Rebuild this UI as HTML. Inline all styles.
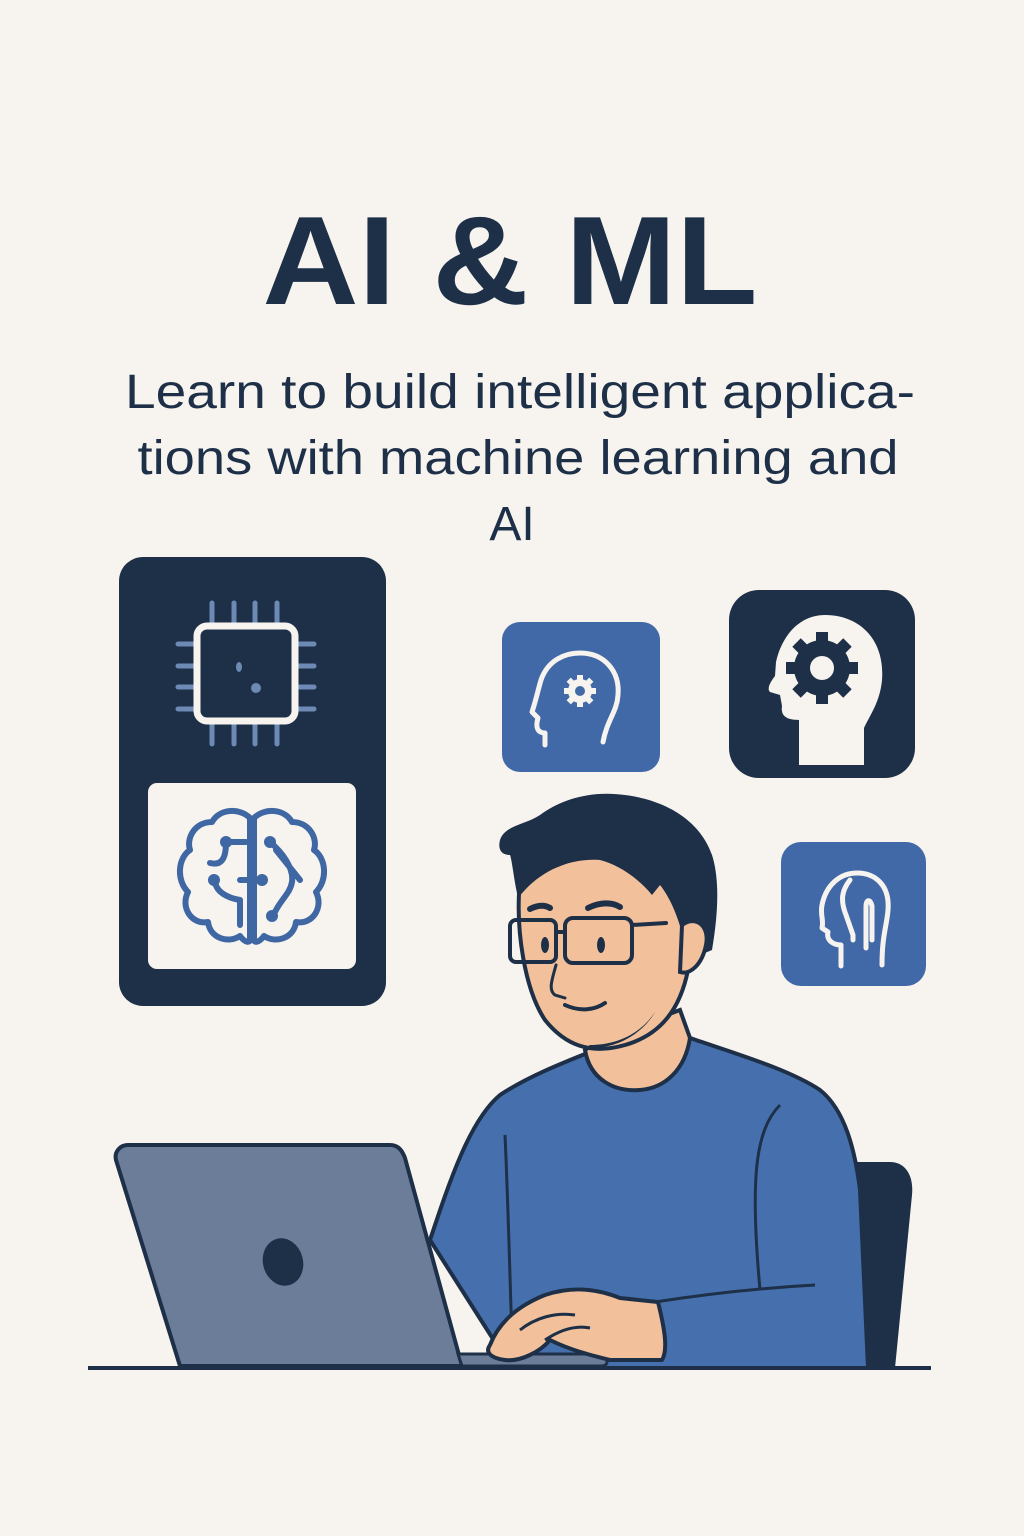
<!DOCTYPE html>
<html><head><meta charset="utf-8"><style>
html,body{margin:0;padding:0;background:#f7f4ef}
svg{display:block}
</style></head><body>
<svg width="1024" height="1536" viewBox="0 0 1024 1536" xmlns="http://www.w3.org/2000/svg">
<rect width="1024" height="1536" fill="#f7f4ef"/>
<g font-family="Liberation Sans, sans-serif" fill="#1e2f48">
<text x="510" y="304" font-size="126" font-weight="bold" text-anchor="middle" textLength="495" lengthAdjust="spacingAndGlyphs">AI &amp; ML</text>
<text x="520" y="408" font-size="48" text-anchor="middle" textLength="790" lengthAdjust="spacingAndGlyphs">Learn to build intelligent applica-</text>
<text x="518" y="474" font-size="48" text-anchor="middle" textLength="761" lengthAdjust="spacingAndGlyphs">tions with machine learning and</text>
<text x="512" y="540" font-size="48" text-anchor="middle">AI</text>
</g>

<!-- left panel -->
<rect x="119" y="557" width="267" height="449" rx="24" fill="#1e2f48"/>
<g stroke="#6d8ab5" stroke-width="5" stroke-linecap="round">
<path d="M212 603V623M234 603V623M255 603V623M277 603V623M212 724V744M234 724V744M255 724V744M277 724V744M178 644H194M178 666H194M178 687H194M178 709H194M298 644H314M298 666H314M298 687H314M298 709H314"/>
</g>
<rect x="197" y="626" width="98" height="95" rx="10" fill="#1e2f48" stroke="#f7f4ef" stroke-width="7"/>
<ellipse cx="239" cy="667" rx="3" ry="5" fill="#6d8ab5"/>
<circle cx="256" cy="688" r="5" fill="#6d8ab5"/>
<rect x="148" y="783" width="208" height="186" rx="9" fill="#f7f4ef"/>
<g fill="none" stroke="#3f67a3" stroke-width="6" stroke-linecap="round" stroke-linejoin="round">
<path d="M250 818C240 808 220 808 212 822C195 822 186 838 190 850C178 858 176 880 188 892C180 908 192 925 208 922C210 938 228 944 240 936C246 944 250 942 250 940Z"/>
<path d="M254 818C264 808 284 808 292 822C309 822 318 838 314 850C326 858 328 880 316 892C324 908 312 925 296 922C294 938 276 944 264 936C258 944 254 942 254 940Z"/>
<path d="M226 842H246M210 863C222 866 226 858 226 842M240 880H260M215 880C215 892 228 898 240 900V925M270 842C282 852 294 868 292 882C290 894 280 900 274 914M276 850L300 880"/>
</g>
<g fill="#3f67a3"><circle cx="226" cy="842" r="6"/><circle cx="270" cy="842" r="6"/><circle cx="262" cy="880" r="6"/><circle cx="214" cy="880" r="6"/><circle cx="272" cy="916" r="6"/></g>

<!-- blue icon 1 -->
<rect x="502" y="622" width="158" height="150" rx="18" fill="#4169a8"/>
<path d="M545 745V733C538 733 535 728 538 718L532 712C536 700 538 690 541 680C548 660 565 653 580 653C605 653 620 672 618 695C617 712 607 720 603 742" fill="none" stroke="#f7f4ef" stroke-width="5" stroke-linecap="round" stroke-linejoin="round"/>
<g transform="translate(580,691)" fill="#f7f4ef">
<circle r="12"/>
<g><rect x="-3" y="-16" width="6" height="32"/><rect x="-16" y="-3" width="32" height="6"/><rect x="-3" y="-16" width="6" height="32" transform="rotate(45)"/><rect x="-3" y="-16" width="6" height="32" transform="rotate(-45)"/></g>
<circle r="5" fill="#4169a8"/>
</g>

<!-- dark icon 2 -->
<rect x="729" y="590" width="186" height="188" rx="30" fill="#1e2f48"/>
<path d="M799 765V720C790 720 780 718 782 706L780 695L770 692C766 688 772 680 775 676L776 662C782 635 800 615 825 615C860 615 885 640 882 680C880 702 870 715 864 728V765Z" fill="#f7f4ef"/>
<g transform="translate(822,668)" fill="#1e2f48">
<circle r="28"/>
<rect x="-6" y="-36" width="12" height="72"/><rect x="-36" y="-6" width="72" height="12"/>
<rect x="-6" y="-36" width="12" height="72" transform="rotate(45)"/><rect x="-6" y="-36" width="12" height="72" transform="rotate(-45)"/>
<circle r="12" fill="#f7f4ef"/>
</g>

<!-- blue icon 3 -->
<rect x="781" y="842" width="145" height="144" rx="20" fill="#4169a8"/>
<g fill="none" stroke="#f7f4ef" stroke-width="5" stroke-linecap="round" stroke-linejoin="round">
<path d="M841 966V945C833 945 826 940 828 932L822 928C824 920 820 915 822 905C826 885 840 873 857 873C875 873 890 885 888 910C887 925 882 935 882 965"/>
<path d="M850 880C842 890 840 900 846 915L853 935V940"/>
<path d="M866 948V906C866 900 870 898 872 906V940"/>
</g>

<!-- chair -->
<path d="M855 1162H890C905 1162 914 1175 912 1195L895 1368H855Z" fill="#1e2f48"/>

<!-- body -->
<path d="M430 1240C450 1180 470 1120 500 1095C530 1075 570 1060 600 1048L690 1038C740 1055 790 1070 820 1090C845 1110 855 1150 860 1190L868 1368H560L500 1350Z" fill="#4670ad" stroke="#1e2f48" stroke-width="4" stroke-linejoin="round"/>
<path d="M505 1135C508 1200 510 1280 512 1340" fill="none" stroke="#1e2f48" stroke-width="3"/>
<path d="M780 1105C755 1130 750 1180 760 1290" fill="none" stroke="#1e2f48" stroke-width="3"/>
<path d="M655 1302C700 1295 760 1288 815 1285" fill="none" stroke="#1e2f48" stroke-width="3"/>
<!-- neck -->
<path d="M585 1050C590 1080 615 1092 640 1090C665 1088 685 1070 690 1038L680 1010L600 1040Z" fill="#f2c09a" stroke="#1e2f48" stroke-width="4"/>
<!-- face -->
<path d="M520 880C515 930 525 990 545 1020C565 1045 590 1055 625 1045C660 1035 680 1010 688 970L700 880L620 840Z" fill="#f2c09a" stroke="#1e2f48" stroke-width="4"/>
<path d="M585 1048C620 1050 645 1030 655 1012C640 1035 615 1045 590 1045Z" fill="#1e2f48"/>
<!-- hair -->
<path d="M500 840C505 825 525 825 540 815C560 800 590 790 625 795C665 800 700 820 712 855C720 880 718 915 712 950L688 960C682 925 672 900 660 885L652 895C640 880 620 865 600 860C570 858 540 870 518 898C514 880 512 860 510 855C500 855 498 848 500 840Z" fill="#1e2f48"/>
<!-- ear -->
<path d="M682 925C695 915 710 925 706 945C702 965 690 975 680 972Z" fill="#f2c09a" stroke="#1e2f48" stroke-width="4"/>
<!-- brows, eyes, glasses -->
<g fill="none" stroke="#1e2f48" stroke-linecap="round">
<path d="M530 909C538 905 545 905 550 908" stroke-width="6"/>
<path d="M588 908C600 902 612 902 620 907" stroke-width="6"/>
<rect x="510" y="920" width="46" height="42" rx="6" stroke-width="4"/>
<rect x="565" y="918" width="67" height="45" rx="8" stroke-width="4"/>
<path d="M556 932H565M632 925L666 923" stroke-width="4"/>
<path d="M556 965C552 980 548 990 555 995L565 998" stroke-width="3"/>
<path d="M565 1005C580 1012 595 1010 605 1003" stroke-width="4"/>
</g>
<ellipse cx="545" cy="945" rx="4" ry="8" fill="#1e2f48"/>
<ellipse cx="601" cy="945" rx="4" ry="8" fill="#1e2f48"/>

<!-- laptop -->
<path d="M128 1145H390C398 1145 402 1150 405 1158L462 1366H180L116 1160C114 1152 120 1145 128 1145Z" fill="#6b7d99" stroke="#1e2f48" stroke-width="4" stroke-linejoin="round"/>
<ellipse cx="283" cy="1262" rx="20" ry="24" transform="rotate(-15 283 1262)" fill="#1e2f48"/>
<path d="M458 1354H600C608 1354 610 1366 602 1366H462Z" fill="#6b7d99" stroke="#1e2f48" stroke-width="3"/>
<!-- hand -->
<path d="M490 1345C500 1320 520 1305 545 1295C575 1285 600 1290 620 1298L658 1302C665 1330 668 1350 662 1360H610C590 1355 570 1350 550 1340C540 1352 520 1362 505 1360C490 1358 485 1352 490 1345Z" fill="#f2c09a" stroke="#1e2f48" stroke-width="4" stroke-linejoin="round"/>
<path d="M520 1330C535 1318 555 1312 575 1315M545 1340C560 1330 575 1325 590 1328" fill="none" stroke="#1e2f48" stroke-width="3"/>

<!-- floor -->
<path d="M88 1368H931" stroke="#1e2f48" stroke-width="4"/>
</svg>
</body></html>
